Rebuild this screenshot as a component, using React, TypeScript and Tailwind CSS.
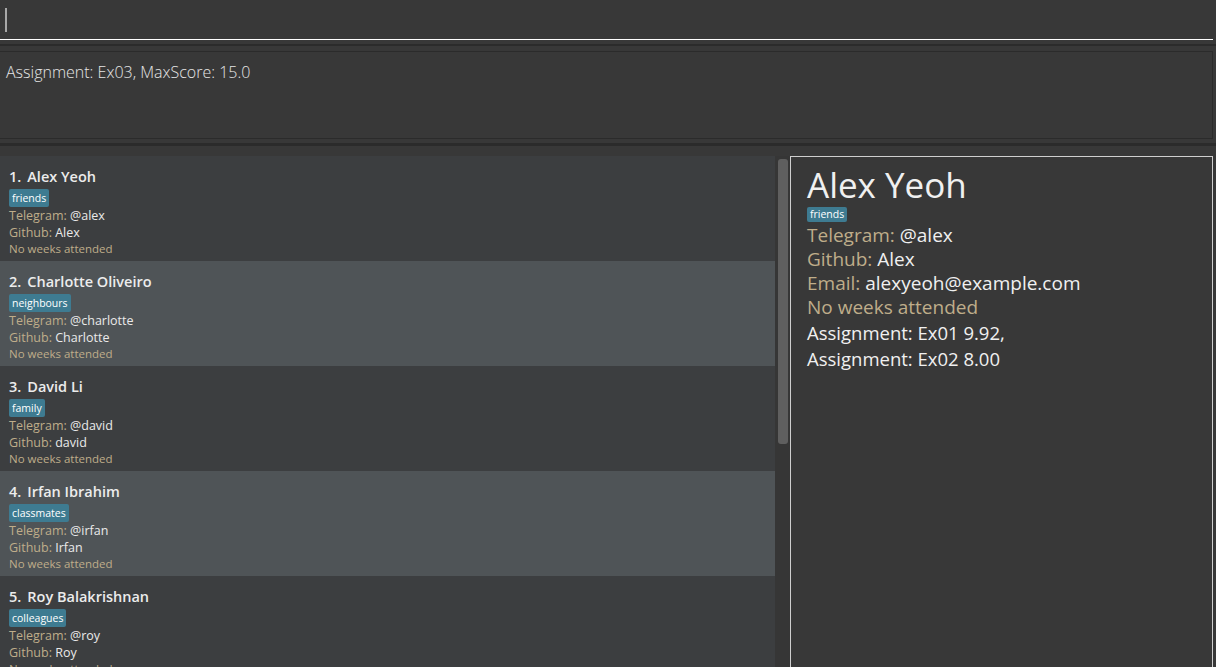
import React from "react";

interface Person {
  name: string
  tag: string
  telegram: string
  github: string
}

const people: Person[] = [
  { name: "Alex Yeoh", tag: "friends", telegram: "@alex", github: "Alex" },
  { name: "Charlotte Oliveiro", tag: "neighbours", telegram: "@charlotte", github: "Charlotte" },
  { name: "David Li", tag: "family", telegram: "@david", github: "david" },
  { name: "Irfan Ibrahim", tag: "classmates", telegram: "@irfan", github: "Irfan" },
  { name: "Roy Balakrishnan", tag: "colleagues", telegram: "@roy", github: "Roy" },
];

const font = { fontFamily: '"Open Sans", "Noto Sans", sans-serif' };

function PersonCard({ p, i }: { p: Person; i: number }) {
  return (
    <div className={(i % 2 == 1 ? "bg-[#4f5457]" : "bg-[#3c3e40]") + " h-[105px] shrink-0 pl-[9px] pt-[10px]"}>
      <p className="text-[14.5px] font-semibold text-[#ececec] leading-[22px]">
        {i + 1}.<span className="ml-[6px]">{p.name}</span>
      </p>
      <div className="flex h-[19px] items-center">
        <span className="bg-[#3e7b91] text-white text-[10.5px] leading-[18px] px-[3px] rounded-[2px]">
          {p.tag}
        </span>
      </div>
      <p className="text-[12.5px] leading-[17px]">
        <span className="text-[#bfad8a]">Telegram: </span>
        <span className="text-[#eaeaea]">{p.telegram}</span>
      </p>
      <p className="text-[12.5px] leading-[17px]">
        <span className="text-[#bfad8a]">Github: </span>
        <span className="text-[#eaeaea]">{p.github}</span>
      </p>
      <p className="text-[11.5px] leading-[16px] text-[#bfad8a]">No weeks attended</p>
    </div>
  )
}

export default function App() {
  return (
    <main className="w-[1216px] h-[667px] overflow-hidden bg-[#383838] flex flex-col" style={font}>
      <div className="h-[40px] shrink-0 pr-[3px]">
        <div className="h-full border-b border-white flex items-center pl-[5px]">
          <div className="w-[1.5px] h-[24px] bg-[#a8a8a8] mt-[1px]" />
        </div>
      </div>
      <div className="h-[4px] shrink-0" />
      <div className="h-[2px] bg-[#2b2b2b] shrink-0" />
      <div className="h-[5px] shrink-0" />
      <div className="h-[88px] shrink-0 pr-[3px]">
        <div className="h-full border border-l-0 border-[#2b2b2b] pl-[6px] pt-[8px]">
          <p className="text-[16px] text-[#e6e6e6] font-light leading-[24px]">Assignment: Ex03, MaxScore: 15.0</p>
        </div>
      </div>
      <div className="h-[4px] shrink-0" />
      <div className="h-[3px] bg-[#2b2b2b] shrink-0" />
      <div className="h-[10px] shrink-0" />
      <div className="flex flex-1 min-h-0 pr-[3px]">
        <div className="w-[775px] flex flex-col overflow-hidden">
          {people.map((p, i) => (
            <PersonCard key={p.name} p={p} i={i} />
          ))}
        </div>
        <div className="w-[15px] bg-[#363636] pt-[3px] pl-[3px]">
          <div className="w-[10px] h-[285px] bg-[#5f5f5f] rounded-[3px]" />
        </div>
        <div className="flex-1 border border-b-0 border-[#cfcfcf] pl-[16px] pt-[4px]">
          <p className="text-[35px] text-[#f0f0f0] leading-[48px]">Alex Yeoh</p>
          <div className="flex h-[17px] items-center mt-[-3px]">
            <span className="bg-[#3e7b91] text-white text-[10.5px] leading-[15px] px-[3px] rounded-[2px]">friends</span>
          </div>
          <p className="text-[19px] leading-[24px]">
            <span className="text-[#bfad8a]">Telegram: </span>
            <span className="text-[#f0f0f0]">@alex</span>
          </p>
          <p className="text-[19px] leading-[24px]">
            <span className="text-[#bfad8a]">Github: </span>
            <span className="text-[#f0f0f0]">Alex</span>
          </p>
          <p className="text-[19px] leading-[24px]">
            <span className="text-[#bfad8a]">Email: </span>
            <span className="text-[#f0f0f0]">alexyeoh@example.com</span>
          </p>
          <p className="text-[19px] leading-[24px] text-[#bfad8a]">No weeks attended</p>
          <p className="text-[18.5px] leading-[26px] text-[#f0f0f0] mt-[1px]">
            Assignment: Ex01 9.92,
            <br />
            Assignment: Ex02 8.00
          </p>
        </div>
      </div>
    </main>
  )
}
